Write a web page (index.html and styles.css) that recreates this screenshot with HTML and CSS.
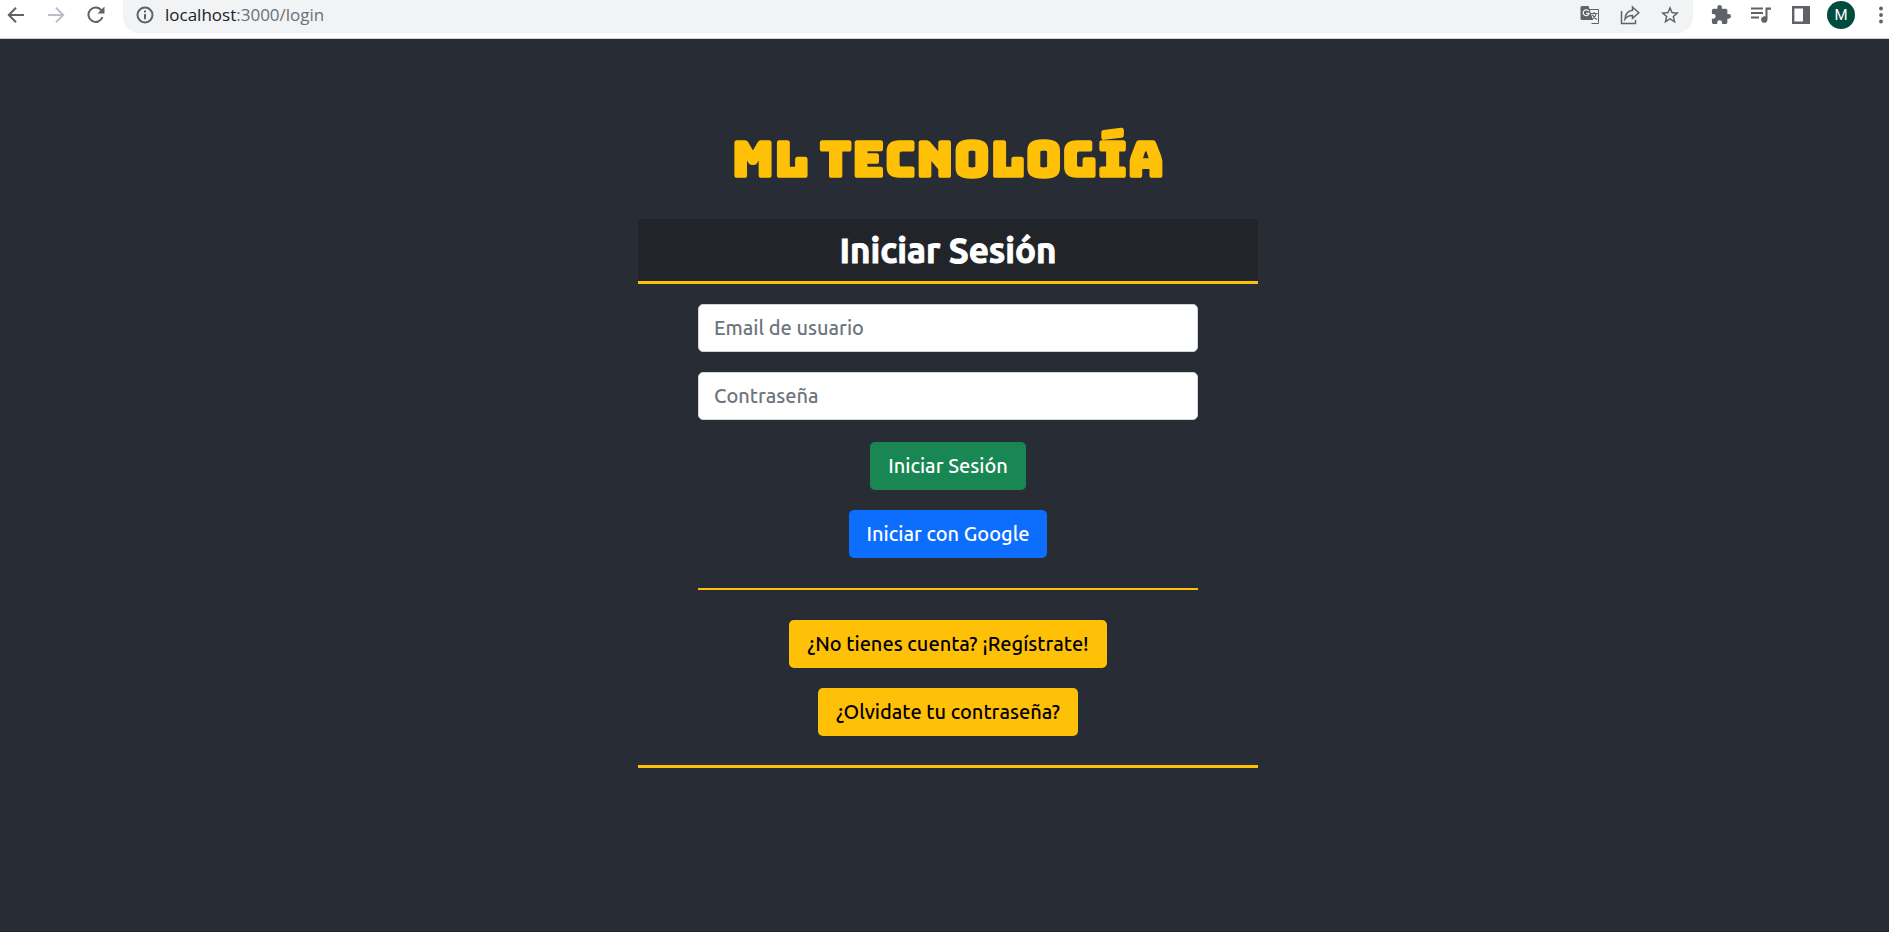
FILE: index.html
```
<!DOCTYPE html>
<html lang="es">
<head>
<meta charset="utf-8">
<title>ML Tecnología</title>
<meta name="viewport" content="width=device-width, initial-scale=1">
<link rel="stylesheet" href="styles.css">
</head>
<body>
<header class="toolbar">
  <nav class="nav" aria-label="Navegación">
    <button class="icon-btn" type="button" aria-label="Atrás">
      <svg width="18" height="18" viewBox="0 0 18 18"><path d="M17 9H2M9 1.800L1.800 9L9 16.200" class="line"/></svg>
    </button>
    <button class="icon-btn muted" type="button" aria-label="Adelante">
      <svg width="18" height="18" viewBox="0 0 18 18"><path d="M1 9H16M9 1.800L16.200 9L9 16.200" class="line"/></svg>
    </button>
    <button class="icon-btn" type="button" aria-label="Recargar">
      <svg width="18" height="18" viewBox="0 0 18 18"><path d="M15.500 11A7.200 7.200 0 1 1 14.500 4.500" class="line"/><path d="M17.500 0.500V7.500H10.500Z"/></svg>
    </button>
  </nav>
  <div class="address">
    <svg width="18" height="18" viewBox="0 0 18 18"><circle cx="9" cy="9" r="7.500" class="line"/><path d="M8 8H10V13.200H8ZM8 4.600H10V6.600H8Z"/></svg>
    <p class="url"><span class="host">localhost</span>:3000/login</p>
    <div class="page-actions">
      <button class="icon-btn" type="button" aria-label="Traducir">
        <svg width="20" height="20" viewBox="0 0 20 20"><path d="M9 4.500H18.500V18.500H11.500" fill="none" stroke="#5f6368"/><path d="M2 1H8.500L13 15H2A1.500 1.500 0 0 1 .5 13.500V2.500A1.500 1.500 0 0 1 2 1Z"/><path d="M8.700 6.300A2.900 2.900 0 1 0 9 8.300H6.300" fill="none" stroke="#f1f3f4" stroke-width="1.300"/><path d="M11 8.500H17.500M14 7V8.500M16.300 8.500C15.800 11 14 13 12.500 14M12.500 9.800C13.500 12 15 13.500 17 14.500" fill="none" stroke="#5f6368" stroke-width="1.200"/></svg>
      </button>
      <button class="icon-btn" type="button" aria-label="Compartir">
        <svg width="20" height="20" viewBox="0 0 20 20"><path d="M1.500 6V18.500H15.500V15" fill="none" stroke="#5f6368" stroke-width="1.500"/><path d="M12.500 2L18.800 7.800L12.500 13.400V10.400C9 10.300 6.800 11.500 5 14C5.300 9.500 8 6 12.500 5.300Z" fill="none" stroke="#5f6368" stroke-width="1.500"/></svg>
      </button>
      <button class="icon-btn" type="button" aria-label="Añadir a favoritos">
        <svg width="20" height="20" viewBox="1 1 22 22"><path d="M22 9.240l-7.190-.620L12 2 9.190 8.630 2 9.240l5.460 4.730L5.820 21 12 17.270 18.180 21l-1.630-7.030L22 9.240zM12 15.400l-3.760 2.270 1-4.280-3.320-2.880 4.380-.380L12 6.100l1.710 4.040 4.380.380-3.320 2.880 1 4.280L12 15.400z"/></svg>
      </button>
    </div>
  </div>
  <div class="browser-actions">
    <button class="icon-btn" type="button" aria-label="Extensiones">
      <svg width="20" height="20" viewBox="1 1 22 22"><path d="M20.500 11H19V7c0-1.100-.9-2-2-2h-4V3.500a2.500 2.500 0 0 0-5 0V5H4c-1.100 0-2 .9-2 2v3.800h1.500a2.700 2.700 0 0 1 0 5.400H2V20c0 1.100.9 2 2 2h3.800v-1.500a2.700 2.700 0 0 1 5.400 0V22H17c1.100 0 2-.9 2-2v-4h1.500a2.500 2.500 0 0 0 0-5z"/></svg>
    </button>
    <button class="icon-btn" type="button" aria-label="Control multimedia">
      <svg width="20" height="20" viewBox="0 0 20 20"><path d="M0 2.500H12V4.500H0ZM0 7H12V9H0ZM0 11.500H8V13.500H0ZM14.500 2.500H20V4.700H16.500V14.500A3.200 3.200 0 1 1 14.500 11.600Z"/></svg>
    </button>
    <button class="icon-btn" type="button" aria-label="Panel lateral">
      <svg width="20" height="20" viewBox="0 0 20 20"><path fill-rule="evenodd" d="M1 1H19V19H1ZM3.400 3.400V16.600H12V3.400Z"/></svg>
    </button>
    <button class="avatar" type="button" aria-label="Perfil M">M</button>
    <button class="icon-btn" type="button" aria-label="Menú">
      <svg width="20" height="20" viewBox="0 0 20 20"><circle cx="10" cy="3.500" r="1.900"/><circle cx="10" cy="10" r="1.900"/><circle cx="10" cy="16.500" r="1.900"/></svg>
    </button>
  </div>
</header>
<main class="page">
  <h1 class="brand">ML TECNOLOGÍA</h1>
  <section class="login">
    <h2 class="login-title">Iniciar Sesión</h2>
    <form class="login-form">
      <input class="field" type="email" placeholder="Email de usuario" aria-label="Email de usuario">
      <input class="field" type="password" placeholder="Contraseña" aria-label="Contraseña">
      <button class="btn btn-success" type="button">Iniciar Sesión</button>
      <button class="btn btn-primary" type="button">Iniciar con Google</button>
      <hr class="divider">
      <button class="btn btn-warning" type="button">¿No tienes cuenta? ¡Regístrate!</button>
      <button class="btn btn-warning" type="button">¿Olvidate tu contraseña?</button>
    </form>
  </section>
</main>
</body>
</html>
```
FILE: styles.css
```
* { box-sizing: border-box; }

body {
  margin: 0;
  min-height: 100vh;
  display: flex;
  flex-direction: column;
  background: #282c34;
  font-family: "Ubuntu", "Noto Sans", sans-serif;
}

button { border: 0; padding: 0; background: none; font: inherit; color: inherit; }
svg { display: block; fill: currentColor; }

.line { fill: none; stroke: currentColor; stroke-width: 2; }

.toolbar {
  display: flex;
  align-items: flex-start;
  height: 39px;
  padding: 0 0 0 7px;
  background: #fff;
  border-bottom: 1px solid #cdd0d4;
  color: #5f6368;
}

.nav, .page-actions, .browser-actions { display: flex; align-items: center; height: 30px; }
.nav { gap: 22px; width: 116px; }
.muted { color: #babec6; }

.address {
  flex: 1;
  display: flex;
  align-items: center;
  height: 33px;
  padding: 0 13px 3px;
  background: #f1f3f4;
  border-radius: 0 0 16px 16px;
}

.url { margin: 0 auto 0 11px; font: 17px/24px "Segoe UI", "Open Sans", sans-serif; color: #6b7075; }
.host { color: #202124; }
.page-actions { gap: 20px; }
.browser-actions { gap: 20px; padding-left: 18px; margin-right: -2px; }

.avatar {
  width: 28px;
  height: 28px;
  margin: 0 -4px;
  border-radius: 50%;
  background: #004d40;
  color: #fff;
  font: 15px/28px Roboto, sans-serif;
}

.page {
  flex: 1;
  display: flex;
  flex-direction: column;
  align-items: center;
  padding: 84px 0 24px 7px;
  border-bottom: 1px solid #202329;
}

.brand {
  margin: 0;
  color: #ffc107;
  font: 900 50px/72px "Bungee", Inter, sans-serif;
}

.login { width: 100%; max-width: 620px; margin-top: 24px; border-bottom: 3px solid #ffc107; }

.login-title {
  margin: 0;
  padding: 9px 0;
  background: #212529;
  border-bottom: 3px solid #ffc107;
  color: #fff;
  text-align: center;
  font-size: 35px;
  line-height: 44px;
  font-weight: 700;
  -webkit-text-stroke: 1px #fff;
}

.login-form {
  display: flex;
  flex-direction: column;
  align-items: center;
  gap: 20px;
  padding: 20px 60px 29px;
}

.field {
  width: 100%;
  height: 48px;
  padding: 0 16px 2px 15px;
  border: 1px solid #ced4da;
  border-radius: 5px;
  background: #fff;
  font: 500 20px/30px "Ubuntu", "Noto Sans", sans-serif;
}
.field::placeholder { color: #6c757d; opacity: 1; }

.btn { height: 48px; padding: 0 18px; border-radius: 5px; font-size: 20px; line-height: 30px; font-weight: 500; }
.btn-success { margin-top: 2px; background: #198754; color: #fff; }
.btn-primary { background: #0d6efd; color: #fff; }
.btn-warning { background: #ffc107; color: #000; }

.divider { width: 100%; height: 2px; margin: 10px 0; border: 0; background: #ffc107; }
```
